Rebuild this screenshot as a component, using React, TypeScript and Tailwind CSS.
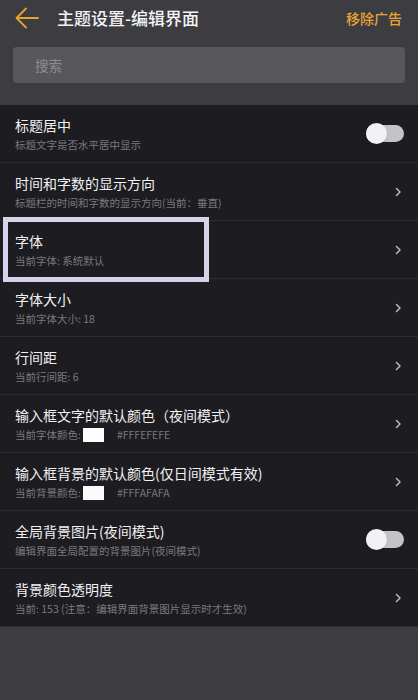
import React from "react";

// Theme settings — editor screen (dark mode)

type Row =
  | { kind: "toggle"; title: string; sub: string }
  | { kind: "link"; title: string; sub: string; swatch?: string; hex?: string; focused?: boolean };

const rows: Row[] = [
  { kind: "toggle", title: "标题居中", sub: "标题文字是否水平居中显示" },
  { kind: "link", title: "时间和字数的显示方向", sub: "标题栏的时间和字数的显示方向(当前：垂直)" },
  { kind: "link", title: "字体", sub: "当前字体: 系统默认", focused: true },
  { kind: "link", title: "字体大小", sub: "当前字体大小: 18" },
  { kind: "link", title: "行间距", sub: "当前行间距: 6" },
  { kind: "link", title: "输入框文字的默认颜色（夜间模式）", sub: "当前字体颜色:", swatch: "#FEFEFE", hex: "#FFFEFEFE" },
  { kind: "link", title: "输入框背景的默认颜色(仅日间模式有效)", sub: "当前背景颜色:", swatch: "#FAFAFA", hex: "#FFFAFAFA" },
  { kind: "toggle", title: "全局背景图片(夜间模式)", sub: "编辑界面全局配置的背景图片(夜间模式)" },
  { kind: "link", title: "背景颜色透明度", sub: "当前: 153 (注意：编辑界面背景图片显示时才生效)" },
];

const font = { fontFamily: '"Noto Sans CJK SC", "Noto Sans", sans-serif' };

function Toggle() {
  return (
    <div className="relative w-[38px] h-[20px] flex items-center">
      <div className="w-full h-[17px] rounded-full bg-[#c4c4c7]" />
      <div className="absolute left-0 top-[-1px] w-[21px] h-[21px] rounded-full bg-[#f2f2f4] shadow" />
    </div>
  );
}

function Chevron() {
  return (
    <svg className="w-[12px] h-[12px] text-[#b9b8bd]" viewBox="0 0 24 24" fill="none" stroke="currentColor" strokeWidth={3} strokeLinecap="round" strokeLinejoin="round">
      <path d="M9 5l7 7-7 7" />
    </svg>
  );
}

function SettingRow({ row }: { row: Row }) {
  return (
    <div className="relative flex items-center h-[58px] pl-[15px] pr-[14px] border-b border-[#2d2c31]">
      {row.kind === "link" && row.focused && (
        <div className="absolute left-[3px] top-[-4px] w-[206px] h-[65px] border-[5px] border-[#d8d1ea] pointer-events-none" />
      )}
      <div className="flex-1 min-w-0 pt-[1px]">
        <p className="text-[14px] leading-[20px] text-[#f1f1f3] whitespace-nowrap">{row.title}</p>
        <div className="flex items-center mt-[2px] text-[10.5px] leading-[16px] text-[#7a797f] whitespace-nowrap">
          <span>{row.sub}</span>
          {row.kind === "link" && row.swatch && (
            <>
              <span className="ml-[2px] w-[21px] h-[14px]" style={{ backgroundColor: row.swatch }} />
              <span className="ml-[13px]">{row.hex}</span>
            </>
          )}
        </div>
      </div>
      {row.kind === "toggle" ? <Toggle /> : <Chevron />}
    </div>
  );
}

export default function App() {
  return (
    <div className="min-h-[700px] bg-[#3d3c41]" style={font}>
      {/* Header */}
      <div className="flex items-center h-[36px] pl-[15px] pr-[16px]">
        <svg className="w-[24px] h-[22px] text-[#e5a533]" viewBox="0 0 24 22" fill="none" stroke="currentColor" strokeWidth={1.8} strokeLinecap="round" strokeLinejoin="round">
          <path d="M23 11H2M11 1.5L1.5 11 11 20.5" />
        </svg>
        <h1 className="ml-[18px] flex-1 text-[17px] text-[#f3f3f5] font-medium">主题设置-编辑界面</h1>
        <span className="text-[14px] text-[#e5a533] font-medium">移除广告</span>
      </div>

      {/* Search */}
      <div className="px-[13px] mt-[11px]">
        <div className="h-[36px] rounded-[4px] bg-[#58575c] flex items-center px-[22px]">
          <span className="text-[13.5px] text-[#8f8e93]">搜索</span>
        </div>
      </div>

      {/* Settings list */}
      <div className="mt-[22px] bg-[#1d1c21]">
        {rows.map((row) => (
          <SettingRow key={row.title} row={row} />
        ))}
      </div>
    </div>
  );
}
